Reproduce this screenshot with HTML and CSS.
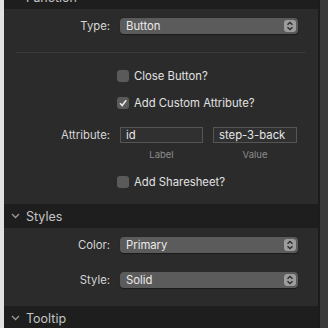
FILE: index.html
```html
<!DOCTYPE html>
<html lang="en">
<head>
    <meta charset="UTF-8">
    <meta name="viewport" content="width=device-width, initial-scale=1.0">
    <title>Inspector</title>
    <link rel="stylesheet" href="styles.css">
</head>
<body>
    <div class="window">
        <div class="panel">
            <div class="section-header top">
                <svg class="chevron" width="9" height="6" viewBox="0 0 9 6"><path d="M1 1 L4.5 4.5 L8 1" fill="none" stroke="#9a9a9a" stroke-width="1.3"/></svg>
                <span>Function</span>
            </div>

            <div class="form-row first">
                <label>Type:</label>
                <div class="popup">
                    <span>Button</span>
                    <span class="stepper"><svg width="8" height="10" viewBox="0 0 8 10"><path d="M1.5 3.8 L4 1.5 L6.5 3.8 M1.5 6.2 L4 8.5 L6.5 6.2" fill="none" stroke="#2a2a2a" stroke-width="1.3"/></svg></span>
                </div>
            </div>

            <div class="divider"></div>

            <div class="check-row close">
                <span class="box"></span>
                <span>Close Button?</span>
            </div>
            <div class="check-row custom">
                <span class="box checked"><svg width="10" height="10" viewBox="0 0 10 10"><path d="M2 5.2 L4.2 7.6 L8.2 2.2" fill="none" stroke="#e8e8e8" stroke-width="1.6"/></svg></span>
                <span>Add Custom Attribute?</span>
            </div>

            <div class="form-row attr">
                <label>Attribute:</label>
                <div class="pair">
                    <div class="field">id</div>
                    <div class="field">step-3-back</div>
                </div>
            </div>
            <div class="form-row captions">
                <span></span>
                <div class="pair">
                    <span class="caption">Label</span>
                    <span class="caption">Value</span>
                </div>
            </div>

            <div class="check-row share">
                <span class="box"></span>
                <span>Add Sharesheet?</span>
            </div>

            <div class="section-header styles">
                <svg class="chevron" width="9" height="6" viewBox="0 0 9 6"><path d="M1 1 L4.5 4.5 L8 1" fill="none" stroke="#9a9a9a" stroke-width="1.3"/></svg>
                <span>Styles</span>
            </div>

            <div class="form-row color">
                <label>Color:</label>
                <div class="popup">
                    <span>Primary</span>
                    <span class="stepper"><svg width="8" height="10" viewBox="0 0 8 10"><path d="M1.5 3.8 L4 1.5 L6.5 3.8 M1.5 6.2 L4 8.5 L6.5 6.2" fill="none" stroke="#2a2a2a" stroke-width="1.3"/></svg></span>
                </div>
            </div>
            <div class="form-row style">
                <label>Style:</label>
                <div class="popup">
                    <span>Solid</span>
                    <span class="stepper"><svg width="8" height="10" viewBox="0 0 8 10"><path d="M1.5 3.8 L4 1.5 L6.5 3.8 M1.5 6.2 L4 8.5 L6.5 6.2" fill="none" stroke="#2a2a2a" stroke-width="1.3"/></svg></span>
                </div>
            </div>

            <div class="section-header tooltip">
                <svg class="chevron" width="9" height="6" viewBox="0 0 9 6"><path d="M1 1 L4.5 4.5 L8 1" fill="none" stroke="#9a9a9a" stroke-width="1.3"/></svg>
                <span>Tooltip</span>
            </div>
        </div>
        <div class="track"></div>
    </div>
</body>
</html>
```

FILE: styles.css
```css
/* Inspector panel, dark mode */
body {
    margin: 0;
    padding: 0;
    background-color: #e2e2e2;
    font-family: Inter, "Noto Sans", sans-serif;
    font-size: 11.3px;
    color: #dedede;
    overflow: hidden;
}
.window {
    display: flex;
    height: 328px;
    margin-left: 4px;
}
.panel {
    width: 314px;
    height: 328px;
    background-color: #2b2b2b;
    overflow: hidden;
}
.track {
    width: 8px;
    border-left: 2px solid #1c1c1c;
    background-color: #3a3a3a;
}
.section-header {
    display: flex;
    align-items: center;
    gap: 6px;
    height: 24px;
    padding-left: 7px;
    background-color: #1e1e1e;
    color: #c4c4c4;
    font-size: 12.5px;
}
.section-header.top {
    margin-top: -15px;
}
.section-header.styles {
    margin-top: 16px;
}
.section-header.tooltip {
    margin-top: 18px;
}
.form-row {
    display: grid;
    grid-template-columns: 106px 178px;
    column-gap: 10px;
    align-items: center;
}
.form-row label {
    text-align: right;
    color: #d6d6d6;
}
.form-row.first {
    margin-top: 9px;
}
.form-row.attr {
    margin-top: 18px;
}
.form-row.captions {
    margin-top: 6px;
}
.form-row.color {
    margin-top: 9px;
}
.form-row.style {
    margin-top: 19px;
}
.popup {
    display: flex;
    align-items: center;
    justify-content: space-between;
    height: 16px;
    padding: 0 2px 0 6px;
    background-color: #5b5b5b;
    border-radius: 4px;
    color: #eaeaea;
    box-shadow: 0 0.5px 1px rgba(0, 0, 0, 0.4);
}
.stepper {
    display: flex;
    align-items: center;
    justify-content: center;
    width: 12px;
    height: 12px;
    background-color: #9c9c9c;
    border-radius: 3px;
}
.divider {
    height: 1px;
    margin: 18px 12px 0 12px;
    background-color: #3a3a3a;
}
.check-row {
    display: flex;
    align-items: center;
    gap: 5px;
    height: 12px;
    padding-left: 113px;
    color: #e2e2e2;
}
.check-row.close {
    margin-top: 17px;
}
.check-row.custom {
    margin-top: 15px;
}
.check-row.share {
    margin-top: 16px;
}
.box {
    display: flex;
    align-items: center;
    justify-content: center;
    width: 12px;
    height: 12px;
    border-radius: 3px;
    background-color: #5a5a5a;
}
.pair {
    display: grid;
    grid-template-columns: 83px 84px;
    column-gap: 10px;
}
.field {
    height: 14px;
    line-height: 14px;
    padding: 0 5px;
    border: 1px solid #555555;
    background-color: #303030;
    color: #e6e6e6;
    white-space: nowrap;
    overflow: hidden;
}
.caption {
    text-align: center;
    font-size: 9.5px;
    color: #8c8c8c;
}
```
